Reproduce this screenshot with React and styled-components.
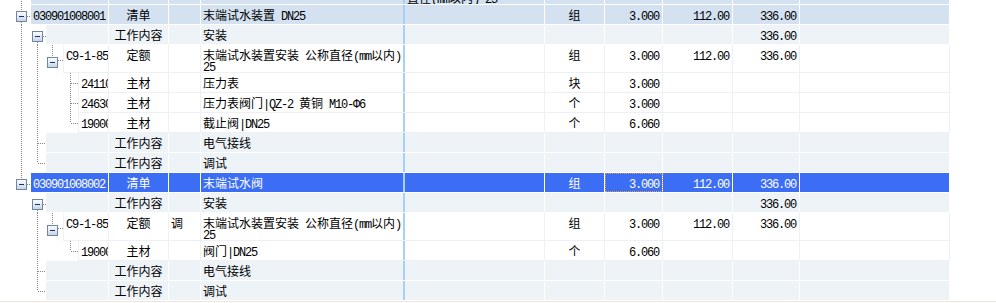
import React from "react";
import styled, { createGlobalStyle } from "styled-components";

const GlobalStyle = createGlobalStyle`
  html, body { margin: 0; padding: 0; background: #fff; }
  body {
    font-family: "Noto Sans CJK SC", "Noto Sans", sans-serif;
    font-size: 12px;
    color: #000;
  }
`;

// row colour schemes
const KINDS = {
  bill: { bg: "#d3e1f1", line: "#ffffff", fg: "#000" },
  sel: { bg: "#3c6df5", line: "#ffffff", fg: "#fff" },
  work: { bg: "#eef3f8", line: "#ffffff", fg: "#000" },
  plain: { bg: "#ffffff", line: "#edf1f7", fg: "#000" },
};

const INDENT = [31, 46, 63, 78];

const Grid = styled.div`
  width: 996px;
  height: 303px;
  overflow: hidden;
  display: flex;
  flex-direction: column;
  background: #fff;
`;

const Row = styled.div`
  display: flex;
  flex: none;
  height: ${(p) => p.$h}px;
  margin-top: ${(p) => p.$shift || 0}px;
`;

const Gutter = styled.div`
  flex: none;
  width: ${(p) => p.$w}px;
  height: 100%;
  svg { display: block; }
`;

const Cells = styled.div`
  display: flex;
  flex: none;
  box-sizing: border-box;
  height: 100%;
  width: ${(p) => 950 - p.$indent}px;
  background: ${(p) => KINDS[p.$kind].bg};
  color: ${(p) => KINDS[p.$kind].fg};
  border-bottom: 1px solid ${(p) => KINDS[p.$kind].line};
`;

const Cell = styled.div`
  flex: none;
  box-sizing: border-box;
  width: ${(p) => p.$w}px;
  height: 100%;
  padding: ${(p) => p.$pt ?? 4}px ${(p) => (p.$align === "right" ? 3 : 2)}px 0 2px;
  line-height: 11px;
  text-align: ${(p) => p.$align || "left"};
  white-space: nowrap;
  overflow: hidden;
  border-right: 1px solid ${(p) => KINDS[p.$kind].line};
  outline: ${(p) => (p.$focus ? "1px dotted #dca040" : "none")};
  outline-offset: -1px;
`;

const CodeCell = styled(Cell)`
  border-left: ${(p) => (p.$kind === "plain" ? `1px solid ${KINDS.plain.line}` : "none")};
`;

const NameCell = styled(Cell)`
  padding-left: 2px;
  border-right: 2px solid #a9cff5;
`;

// half-width latin runs (SimSun-like monospace)
const L = styled.span`
  font-family: "Liberation Mono", monospace;
  letter-spacing: -1.2px;
  line-height: 0;
`;

function Tree({ w, h, v = [], hz = [], box = [] }) {
  return (
    <svg width={w} height={h} shapeRendering="crispEdges">
      <defs>
        <linearGradient id="tbox" x1="0" y1="0" x2="0" y2="1">
          <stop offset="0" stopColor="#ffffff" />
          <stop offset="1" stopColor="#c3d3e9" />
        </linearGradient>
      </defs>
      <g stroke="#858585" strokeDasharray="1 1">
        {v.map(([x, y1, y2], i) => (
          <line key={"v" + i} x1={x + 0.5} y1={y1} x2={x + 0.5} y2={y2} />
        ))}
        {hz.map(([x1, x2, y], i) => (
          <line key={"h" + i} x1={x1} y1={y + 0.5} x2={x2} y2={y + 0.5} />
        ))}
      </g>
      {box.map(([x, y], i) => (
        <g key={"b" + i}>
          <rect x={x + 0.5} y={y + 0.5} width="10" height="10" fill="url(#tbox)" stroke="#71859f" />
          <line x1={x + 3} y1={y + 5.5} x2={x + 8} y2={y + 5.5} stroke="#1c2f66" />
        </g>
      ))}
    </svg>
  );
}

const nameQuota = (
  <>
    末端试水装置安装<L> </L>公称直径<L>(mm</L>以内<L>)</L>
    <br />
    <L>25</L>
  </>
);

const ROWS = [
  {
    level: 0, kind: "bill", h: 20, shift: -15, specTop: 7,
    spec: (<>直径<L>(mm</L>以内<L>) 25</L></>),
    tree: { v: [[21, 0, 20]] },
  },
  {
    level: 0, kind: "bill", h: 20, code: "030901008001", type: "清单",
    name: (<>末端试水装置<L> DN25</L></>), unit: "组", qty: "3.000", price: "112.00", total: "336.00",
    tree: { v: [[21, 0, 6], [21, 17, 20]], hz: [[27, 31, 11]], box: [[16, 6]] },
  },
  {
    level: 1, kind: "work", h: 20, type: "工作内容", name: "安装", total: "336.00",
    tree: { v: [[21, 0, 20], [37, 17, 20]], hz: [[43, 46, 11]], box: [[32, 6]] },
  },
  {
    level: 2, kind: "plain", h: 28, code: "C9-1-85", type: "定额", name: nameQuota,
    unit: "组", qty: "3.000", price: "112.00", total: "336.00",
    tree: { v: [[21, 0, 28], [37, 0, 28], [52, 0, 12]], hz: [[58, 63, 15]], box: [[47, 12]] },
  },
  {
    level: 3, kind: "plain", h: 20, code: "24110001", type: "主材", name: "压力表", unit: "块", qty: "3.000",
    tree: { v: [[21, 0, 20], [37, 0, 20], [70, 0, 20]], hz: [[71, 78, 10]] },
  },
  {
    level: 3, kind: "plain", h: 20, code: "24630001", type: "主材",
    name: (<>压力表阀门<L>|QZ-2 </L>黄铜<L> M10-Φ6</L></>), unit: "个", qty: "3.000",
    tree: { v: [[21, 0, 20], [37, 0, 20], [70, 0, 20]], hz: [[71, 78, 10]] },
  },
  {
    level: 3, kind: "plain", h: 20, code: "19000001", type: "主材",
    name: (<>截止阀<L>|DN25</L></>), unit: "个", qty: "6.060",
    tree: { v: [[21, 0, 20], [37, 0, 20], [70, 0, 10]], hz: [[71, 78, 10]] },
  },
  {
    level: 1, kind: "work", h: 20, type: "工作内容", name: "电气接线",
    tree: { v: [[21, 0, 20], [37, 0, 20]], hz: [[38, 46, 10]] },
  },
  {
    level: 1, kind: "work", h: 20, type: "工作内容", name: "调试",
    tree: { v: [[21, 0, 20], [37, 0, 10]], hz: [[38, 46, 10]] },
  },
  {
    level: 0, kind: "sel", h: 20, code: "030901008002", type: "清单", name: "末端试水阀",
    unit: "组", qty: "3.000", price: "112.00", total: "336.00", focus: true,
    tree: { v: [[21, 0, 6]], hz: [[27, 31, 11]], box: [[16, 6]] },
  },
  {
    level: 1, kind: "work", h: 20, type: "工作内容", name: "安装", total: "336.00",
    tree: { v: [[37, 17, 20]], hz: [[43, 46, 11]], box: [[32, 6]] },
  },
  {
    level: 2, kind: "plain", h: 28, code: "C9-1-85", type: "定额", adj: "调", name: nameQuota,
    unit: "组", qty: "3.000", price: "112.00", total: "336.00",
    tree: { v: [[37, 0, 28], [52, 0, 12]], hz: [[58, 63, 15]], box: [[47, 12]] },
  },
  {
    level: 3, kind: "plain", h: 20, code: "19000001", type: "主材",
    name: (<>阀门<L>|DN25</L></>), unit: "个", qty: "6.060",
    tree: { v: [[37, 0, 20], [70, 0, 10]], hz: [[71, 78, 10]] },
  },
  {
    level: 1, kind: "work", h: 20, type: "工作内容", name: "电气接线",
    tree: { v: [[37, 0, 20]], hz: [[38, 46, 10]] },
  },
  {
    level: 1, kind: "work", h: 20, type: "工作内容", name: "调试",
    tree: { v: [[37, 0, 10]], hz: [[38, 46, 10]] },
  },
];

const FootLine = styled.div`
  flex: none;
  height: 0;
  border-top: 1px solid #f4e4d8;
`;

function BudgetRow({ r }) {
  const indent = INDENT[r.level];
  const k = r.kind;
  const num = (v) => (v ? <L>{v}</L> : null);
  return (
    <Row $h={r.h} $shift={r.shift}>
      <Gutter $w={indent}>
        <Tree w={indent} h={r.h} {...r.tree} />
      </Gutter>
      <Cells $indent={indent} $kind={k}>
        <CodeCell $w={109 - indent} $kind={k}>{num(r.code)}</CodeCell>
        <Cell $w={60} $align="center" $kind={k}>{r.type}</Cell>
        <Cell $w={32} $kind={k}>{r.adj}</Cell>
        <NameCell $w={204} $kind={k}>{r.name}</NameCell>
        <Cell $w={140} $kind={k} $pt={r.specTop}>{r.spec}</Cell>
        <Cell $w={60} $align="center" $kind={k}>{r.unit}</Cell>
        <Cell $w={58} $align="right" $kind={k} $focus={r.focus}>{num(r.qty)}</Cell>
        <Cell $w={70} $align="right" $kind={k}>{num(r.price)}</Cell>
        <Cell $w={67} $align="right" $kind={k}>{num(r.total)}</Cell>
        <Cell $w={150} $kind={k} />
      </Cells>
    </Row>
  );
}

export default function App() {
  return (
    <>
      <GlobalStyle />
      <Grid>
        {ROWS.map((r, i) => (
          <BudgetRow key={i} r={r} />
        ))}
        <FootLine />
      </Grid>
    </>
  );
}
